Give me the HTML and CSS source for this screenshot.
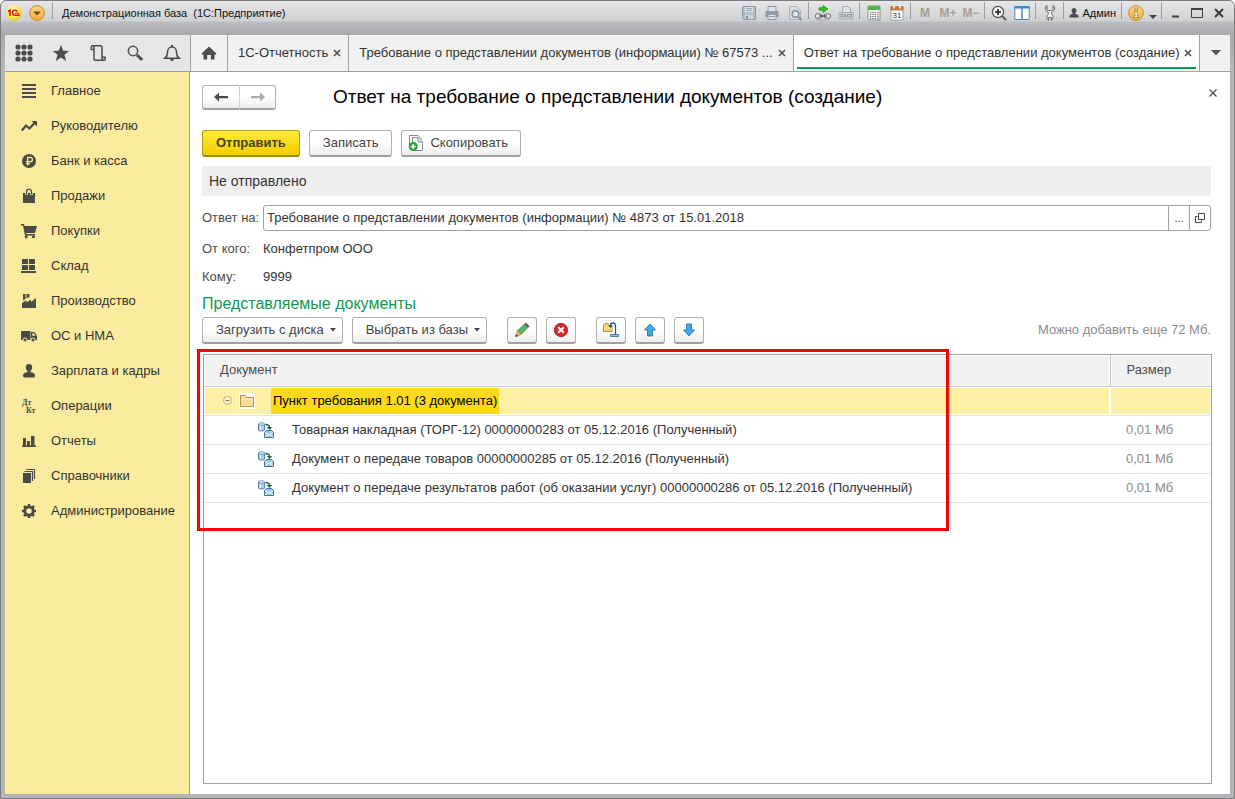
FILE: index.html
```html
<!DOCTYPE html>
<html lang="ru">
<head>
<meta charset="utf-8">
<title>Демонстрационная база (1С:Предприятие)</title>
<link rel="stylesheet" href="styles.css">
</head>
<body>
<div class="window">
  <header class="titlebar">
    <svg class="logo" viewBox="0 0 16 16" width="16" height="16" aria-hidden="true">
      <defs><radialGradient id="lg" cx=".4" cy=".3" r=".8"><stop offset="0" stop-color="#fffbc8"/><stop offset=".6" stop-color="#fde84a"/><stop offset="1" stop-color="#e9b81c"/></radialGradient>
      <linearGradient id="og" x2="0" y2="1"><stop offset="0" stop-color="#fcd489"/><stop offset="1" stop-color="#f7ae36"/></linearGradient></defs>
      <circle cx="8" cy="8" r="7.7" fill="url(#lg)"/>
      <path d="M2 6.500 4 5.200v5.600" fill="none" stroke="#e3190b" stroke-width="1.700"/>
      <path d="M11.300 6.600A2.500 2.500 0 1 0 9 10.200h5" fill="none" stroke="#e3190b" stroke-width="1.500"/>
      <path d="M9 8.200h4.500" fill="none" stroke="#e3190b" stroke-width="1"/>
    </svg>
    <button class="plain main-menu" aria-label="Главное меню"><svg viewBox="0 0 16 16" width="16" height="16"><circle cx="8" cy="8" r="7.400" fill="url(#og)" stroke="#c98a2c"/><path d="M4 6.500h8L8 10.500z" fill="#6b4a1c"/></svg></button>
    <span class="sep"></span>
    <span class="app-name">Демонстрационная база&nbsp; (1С:Предприятие)</span>
    <div class="system">
      <button class="plain cell" aria-label="Сохранить"><svg viewBox="0 0 16 16" width="16" height="16"><path d="M1.500 1.500h13v13h-12l-1-1z" fill="#b4bfca" stroke="#8b9aa9"/><path d="M4 2h8v5H4z" fill="#dde2e7"/><path d="M5 3.500h6M5 5.500h6" stroke="#9aa8b5"/><path d="M4 10h8v4H4z" fill="#cdd5dc"/><path d="M5 11h2v3H5z" fill="#8292a2"/></svg></button>
      <button class="plain cell" aria-label="Печать"><svg viewBox="0 0 16 16" width="16" height="16"><path d="M4 6V1.500h8V6" fill="#dfe2e6" stroke="#8f9ba8"/><path d="M1.500 6h13v6h-13z" fill="#8f9ba8"/><path d="M4 9.500h8v5H4z" fill="#dfe2e6" stroke="#8f9ba8"/><path d="M5 11.500h6" stroke="#8f9ba8"/></svg></button>
      <button class="plain cell" aria-label="Просмотр"><svg viewBox="0 0 16 16" width="16" height="16"><path d="M2.500 1.500h7l4 4v9h-11z" fill="#d6dbe0" stroke="#a7b1bb"/><circle cx="8.500" cy="9" r="3.300" fill="#dfe5ea" stroke="#8594a3" stroke-width="1.600"/><path d="m11 11.500 3.500 3.500" stroke="#8594a3" stroke-width="2"/></svg></button>
      <span class="sep"></span>
      <button class="plain cell" aria-label="Получить ссылку"><svg viewBox="0 0 16 16" width="16" height="16"><path d="M4 2.800h4V.5L13 4 8 7.500V5.200H4z" fill="#35c224" stroke="#168a12" stroke-width=".7"/><rect x=".6" y="9" width="6" height="4" rx="1" fill="#f3f3f3" stroke="#666"/><rect x="9.400" y="9" width="6" height="4" rx="1" fill="#f3f3f3" stroke="#666"/><path d="M4 11h8" stroke="#444" stroke-width="1.300"/><path d="M1 15h14" stroke="#aaa"/></svg></button>
      <button class="plain cell" aria-label="Перейти по ссылке"><svg viewBox="0 0 16 16" width="16" height="16"><path d="M4.500 7V1.500h5l3 2V7" fill="#dfe2e6" stroke="#a0a9b2"/><path d="M1 7.500h14v6.500H1z" fill="#d0d4d8" stroke="#a6aeb6"/><path d="M3 9.500h4v2.500H3zM9.500 9.500h4v2.500h-4zM6 11h4" fill="none" stroke="#8b949d"/></svg></button>
      <span class="sep"></span>
      <button class="plain cell" aria-label="Калькулятор"><svg viewBox="0 0 16 16" width="16" height="16"><path d="M2 1h12v14H2z" fill="#f3f5f3" stroke="#6a8c6a" stroke-width=".8"/><path d="M2 1h12v4H2z" fill="#4fb84b"/><path d="M4 7.500h6.500M4 9.500h6.500M4 11.500h6.500M4 13.500h6.500" stroke="#4a6a62" stroke-dasharray="1.300 1"/><path d="M12 7v4" stroke="#d33" stroke-dasharray="1.200 .8"/><path d="M12 11v3" stroke="#444" stroke-dasharray="1.200 .8"/></svg></button>
      <button class="plain cell" aria-label="Календарь"><svg viewBox="0 0 16 16" width="16" height="16"><path d="M2 1.500h12v13.500H2z" fill="#fbfcfd" stroke="#8994a0" stroke-width=".8"/><path d="M1.500 1.500h13V5.500h-13z" fill="#c0793f"/><path d="M5 .5v3M11 .5v3" stroke="#fff" stroke-width="1.500"/><text x="8" y="13" class="cal-num">31</text></svg></button>
      <span class="sep"></span>
      <button class="plain cell mem">M</button>
      <button class="plain cell mem">M+</button>
      <button class="plain cell mem">M−</button>
      <span class="sep"></span>
      <button class="plain cell" aria-label="Масштаб"><svg viewBox="0 0 16 16" width="16" height="16"><circle cx="7" cy="7" r="5.600" fill="#f4f4f4" stroke="#555" stroke-width="1.200"/><path d="M4 7h6M7 4v6" stroke="#222" stroke-width="1.600"/><path d="m11 11 4 4" stroke="#555" stroke-width="1.800"/></svg></button>
      <button class="plain cell" aria-label="Окна"><svg viewBox="0 0 16 16" width="16" height="16"><path d="M.8 1.500h14.400v13H.8z" fill="#fff" stroke="#4f87b8"/><path d="M.5 1h15v2.500H.5z" fill="#2f8fdd"/><path d="M8 3v11.500" stroke="#5e82a5" stroke-width="1.500"/></svg></button>
      <span class="sep"></span>
      <button class="plain cell" aria-label="Сервис"><svg viewBox="0 0 16 16" width="16" height="16"><path d="M5 .6C2.500 2 2.500 5.800 6.300 7.300v2.200c-2 1.500-1.800 4.500.2 5.900v-3h3v3c2-1.400 2.200-4.400.2-5.900V7.300C13.500 5.800 13.500 2 11 .6v3.900L9.500 5.500h-3L5 4.500z" fill="#f2f2f2" stroke="#666"/></svg></button>
      <span class="sep"></span>
      <button class="plain user"><svg viewBox="0 0 10 10" width="10" height="10"><path d="M5 0a2.400 2.500 0 0 1 1.500 4.500V6c2 .3 3 1 3 2.300V9.500H.5V8.300C.5 7 1.500 6.300 3.500 6V4.500A2.400 2.500 0 0 1 5 0z" fill="#4c4c4c"/></svg>Админ</button>
      <span class="sep"></span>
      <button class="plain cell" aria-label="Информация"><svg viewBox="0 0 16 16" width="16" height="16"><circle cx="8" cy="8" r="7.400" fill="url(#og)" stroke="#c5923c"/><path d="M7 3h2.500v2H7zM6 6.500h3.300V11h1.200v1.500h-5V11H7V8H6z" fill="#fffbe9" stroke="#8e6a30" stroke-width=".7"/></svg></button>
      <button class="plain caret-cell" aria-label="Ещё"><svg viewBox="0 0 8 6" width="8" height="6"><path d="M0 1h8L4 5z" fill="#444"/></svg></button>
      <span class="sep"></span>
      <button class="plain cell win" aria-label="Свернуть"><svg viewBox="0 0 12 12" width="12" height="12"><path d="M3 9.500h7" stroke="#3b3b3b" stroke-width="2"/></svg></button>
      <button class="plain cell win" aria-label="Развернуть"><svg viewBox="0 0 12 12" width="12" height="12"><path d="M.5 1.500h11v9H.5z" fill="none" stroke="#444"/><path d="M0 2h12" stroke="#444" stroke-width="2"/></svg></button>
      <button class="plain cell win" aria-label="Закрыть"><svg viewBox="0 0 12 12" width="12" height="12"><path d="m2 2 8 8M10 2 2 10" stroke="#3b3b3b" stroke-width="2"/></svg></button>
    </div>
  </header>

  <div class="client">
    <div class="topbar">
      <div class="tools">
        <button class="plain" aria-label="Меню функций"><svg viewBox="0 0 18 18" width="18" height="18" fill="#4d4d4d"><circle cx="3" cy="3" r="2.600"/><circle cx="9" cy="3" r="2.600"/><circle cx="15" cy="3" r="2.600"/><circle cx="3" cy="9" r="2.600"/><circle cx="9" cy="9" r="2.600"/><circle cx="15" cy="9" r="2.600"/><circle cx="3" cy="15" r="2.600"/><circle cx="9" cy="15" r="2.600"/><circle cx="15" cy="15" r="2.600"/></svg></button>
        <button class="plain" aria-label="Избранное"><svg viewBox="0 0 18 18" width="18" height="18"><path d="m9 1 2.200 5.800 6 .2-4.800 3.700L14.200 17 9 13.400 3.800 17l1.800-6.300L.8 7l6-.2z" fill="#4d4d4d"/></svg></button>
        <button class="plain" aria-label="История"><svg viewBox="0 0 18 18" width="18" height="18" fill="none" stroke="#4d4d4d" stroke-width="1.500"><path d="M5 5.500H2.200V3.500c0-1 .7-1.800 1.700-1.800h7.300c1 0 1.800.8 1.800 1.800v9.700h3.200v1.300c0 1-.7 1.800-1.700 1.800H6.800c-1 0-1.800-.8-1.800-1.800V3.500c0-1-.4-1.800-1.300-1.800M13 13.200v1.300c0 1 .5 1.800 1.500 1.800"/></svg></button>
        <button class="plain" aria-label="Поиск"><svg viewBox="0 0 18 18" width="18" height="18" fill="none" stroke="#4d4d4d"><circle cx="7" cy="7" r="4.700" stroke-width="1.500"/><path d="m11 11 5.200 5" stroke-width="3"/></svg></button>
        <button class="plain" aria-label="Уведомления"><svg viewBox="0 0 18 18" width="18" height="18"><path d="M2 14.200c2-1.500 2.500-3 2.500-6C4.500 5 6.500 3 9 3s4.500 2 4.500 5.200c0 3 .5 4.500 2.500 6z" fill="none" stroke="#4d4d4d" stroke-width="1.500"/><path d="M8 1h2v2H8zM6.500 15h5L9 17.500z" fill="#4d4d4d"/></svg></button>
      </div>
      <button class="plain home" aria-label="Начальная страница"><svg viewBox="0 0 16 14" width="16" height="14"><path d="m8 .5 7.500 7L14.300 9 13.500 8.200V13.500H9.800V9H6.200v4.500H2.500V8.200L1.700 9 .5 7.500z" fill="#4d4d4d"/></svg></button>
      <div class="tab">
        <button class="plain tab-name">1С-Отчетность</button>
        <button class="plain tab-x" aria-label="Закрыть"><svg viewBox="0 0 8 8" width="8" height="8"><path d="m1 1 6 6M7 1 1 7" stroke="#4d4d4d" stroke-width="1.600"/></svg></button>
      </div>
      <div class="tab">
        <button class="plain tab-name">Требование о представлении документов (информации) № 67573 ...</button>
        <button class="plain tab-x" aria-label="Закрыть"><svg viewBox="0 0 8 8" width="8" height="8"><path d="m1 1 6 6M7 1 1 7" stroke="#4d4d4d" stroke-width="1.600"/></svg></button>
      </div>
      <div class="tab active">
        <button class="plain tab-name">Ответ на требование о представлении документов (создание)</button>
        <button class="plain tab-x" aria-label="Закрыть"><svg viewBox="0 0 8 8" width="8" height="8"><path d="m1 1 6 6M7 1 1 7" stroke="#4d4d4d" stroke-width="1.600"/></svg></button>
      </div>
      <button class="plain more" aria-label="Список окон"><svg viewBox="0 0 10 6" width="10" height="6"><path d="M0 0h10L5 5.500z" fill="#555"/></svg></button>
    </div>

    <div class="body">
      <nav class="sidebar">
        <a href="#"><svg viewBox="0 0 16 16" width="16" height="16"><path d="M1 2h14M1 6h14M1 10h14M1 14h14" stroke="#4a4a46" stroke-width="2"/></svg>Главное</a>
        <a href="#"><svg viewBox="0 0 16 16" width="16" height="16"><path d="m.8 12.500 4.200-5 3.500 3 5-5.500" fill="none" stroke="#4a4a46" stroke-width="2.200"/><path d="M10.500 3H16v5.500z" fill="#4a4a46"/></svg>Руководителю</a>
        <a href="#"><svg viewBox="0 0 16 16" width="16" height="16"><circle cx="8" cy="8" r="7" fill="#4a4a46"/><path d="M6.700 12.500V4.300h2.500a2.200 2.200 0 0 1 0 4.400H5M5 10.600h4" fill="none" stroke="#fbeb9e" stroke-width="1.300"/></svg>Банк и касса</a>
        <a href="#"><svg viewBox="0 0 16 16" width="16" height="16"><path d="M2 5h12v10H2z" fill="#4a4a46"/><path d="M5.500 7V4a2.500 2.800 0 0 1 5 0v3" fill="none" stroke="#fbeb9e" stroke-width="2.600"/><path d="M5.500 6.500V4a2.500 2.800 0 0 1 5 0v2.500" fill="none" stroke="#4a4a46" stroke-width="1.200"/></svg>Продажи</a>
        <a href="#"><svg viewBox="0 0 16 16" width="16" height="16"><path d="M0 1h3l.6 2H16l-2 7H5l.3 1H14v1.500H4L2 2.500H0z" fill="#4a4a46"/><circle cx="5.200" cy="13.700" r="1.500" fill="#4a4a46"/><circle cx="12.500" cy="13.700" r="1.500" fill="#4a4a46"/></svg>Покупки</a>
        <a href="#"><svg viewBox="0 0 16 16" width="16" height="16"><path d="M1 1h6v5H1zM8 1h6v5H8zM1 7h6v5H1zM8 7h6v5H8zM0 13h15v2H0z" fill="#4a4a46"/></svg>Склад</a>
        <a href="#"><svg viewBox="0 0 16 16" width="16" height="16"><path d="M1 15V10l4.500-3v2.500L10 6.500V9l5-4v10zM2 1h2.500v5L2 7.500zM5.500 1H8.500v3L5.500 5.500z" fill="#4a4a46"/></svg>Производство</a>
        <a href="#"><svg viewBox="0 0 16 16" width="16" height="16"><path d="M0 3h9.500v9H0zM10 4h3.500L16 8v4h-6z" fill="#4a4a46"/><path d="M11.300 5.200H13l1.400 2.500h-3.100z" fill="#fbeb9e"/><circle cx="4" cy="12" r="2" fill="#4a4a46" stroke="#fbeb9e"/><circle cx="12" cy="12" r="2" fill="#4a4a46" stroke="#fbeb9e"/></svg>ОС и НМА</a>
        <a href="#"><svg viewBox="0 0 16 16" width="16" height="16"><path d="M8 1c2 0 3.200 1.200 3.200 3.200C11.200 6 10.500 7.200 9.500 8v1.300c3 .3 4.500 1.300 4.500 3.200 0 1.300-.5 2-1.500 2h-9c-1 0-1.500-.7-1.500-2 0-1.900 1.500-2.900 4.500-3.200V8c-1-.8-1.700-2-1.700-3.800C4.800 2.200 6 1 8 1z" fill="#4a4a46"/></svg>Зарплата и кадры</a>
        <a href="#"><svg viewBox="0 0 16 16" width="16" height="16"><text x="1" y="7" class="dtkt">Дт</text><text x="5" y="15" class="dtkt">Кт</text></svg>Операции</a>
        <a href="#"><svg viewBox="0 0 16 16" width="16" height="16"><path d="M1 12.500h14V14H1zM2 5h3v8H2zM6 8h3v5H6zM10 3h3.500v10H10z" fill="#4a4a46"/></svg>Отчеты</a>
        <a href="#"><svg viewBox="0 0 16 16" width="16" height="16"><path d="M2 5h8v10H2z" fill="#4a4a46"/><path d="M3.500 3.500h8V13M5.500 1.500h8V11" fill="none" stroke="#4a4a46" stroke-width="1.200"/></svg>Справочники</a>
        <a href="#"><svg viewBox="0 0 16 16" width="16" height="16"><circle cx="8" cy="8" r="4.200" fill="none" stroke="#4a4a46" stroke-width="2.800"/><path d="M8 1v2.500M8 12.500V15M1 8h2.500M12.500 8H15M3 3l1.800 1.800M11.200 11.200 13 13M13 3l-1.800 1.800M4.800 11.200 3 13" stroke="#4a4a46" stroke-width="2.600"/></svg>Администрирование</a>
      </nav>

      <main class="page">
        <div class="page-head">
          <div class="history">
            <button class="btn" aria-label="Назад"><svg viewBox="0 0 16 12" width="16" height="12"><path d="M1 6l5-4.500V5h9v2.200H6v3.300z" fill="#4a4a4a"/></svg></button>
            <button class="btn" aria-label="Вперед"><svg viewBox="0 0 16 12" width="16" height="12"><path d="m15 6-5-4.500V5H1v2.200h9v3.300z" fill="#ababab"/></svg></button>
          </div>
          <h1>Ответ на требование о представлении документов (создание)</h1>
          <button class="plain page-x" aria-label="Закрыть"><svg viewBox="0 0 8 8" width="8" height="8"><path d="m.5.5 7 7M7.500.5l-7 7" stroke="#444" stroke-width="1.100"/></svg></button>
        </div>

        <div class="commands">
          <button class="btn primary">Отправить</button>
          <button class="btn">Записать</button>
          <button class="btn copy"><svg viewBox="0 0 16 18" width="16" height="18"><path d="M1.500 14V1.500H8" fill="none" stroke="#7d8b97"/><path d="M4.500 3.500h5.500L14.500 8v8.500h-10z" fill="#fff" stroke="#7d8b97"/><path d="M7 1.500h3l4 4M10 3.500V8h4.500" fill="none" stroke="#7d8b97"/><circle cx="5.200" cy="12.500" r="4.500" fill="#2f9e3d"/><path d="M2.700 12.500h5M5.200 10v5" stroke="#fff" stroke-width="1.500"/></svg>Скопировать</button>
        </div>

        <div class="status">Не отправлено</div>

        <div class="row">
          <label for="reply">Ответ на:</label>
          <div class="field">
            <input id="reply" type="text" value="Требование о представлении документов (информации) № 4873 от 15.01.2018">
            <button class="plain dots" aria-label="Выбрать">...</button>
            <button class="plain" aria-label="Открыть"><svg viewBox="0 0 10 10" width="10" height="10" fill="none" stroke="#444"><path d="M3.500.5h6v6h-6zM2.500 3.500h-2v6h6v-2"/></svg></button>
          </div>
        </div>
        <div class="row text"><span class="label">От кого:</span><span>Конфетпром ООО</span></div>
        <div class="row text"><span class="label">Кому:</span><span>9999</span></div>

        <h2>Представляемые документы</h2>
        <div class="doc-tools">
          <button class="btn drop">Загрузить с диска<svg viewBox="0 0 6 4" width="6" height="4"><path d="M0 0h6L3 3.500z" fill="#444"/></svg></button>
          <button class="btn drop">Выбрать из базы<svg viewBox="0 0 6 4" width="6" height="4"><path d="M0 0h6L3 3.500z" fill="#444"/></svg></button>
          <div class="icon-group">
            <button class="btn icon" aria-label="Изменить"><svg viewBox="0 0 16 16" width="16" height="16"><path d="m3.500 8.500 7-6.500 3.500 3.500-7 7z" fill="#4fb860" stroke="#3c8a4a" stroke-width=".6"/><path d="m10.500 2 1.500-1.300 3.500 3.500-1.500 1.300z" fill="#3f5566"/><path d="M3.500 8.500 7 12.500l-3 1.700-2-2z" fill="#f0b555" stroke="#a67a35" stroke-width=".5"/><path d="m2 12 2.200 2.200L1 15z" fill="#444"/></svg></button>
            <button class="btn icon" aria-label="Удалить"><svg viewBox="0 0 16 16" width="16" height="16"><circle cx="8" cy="8" r="6.700" fill="#d9262b" stroke="#a91e22" stroke-width=".8"/><path d="m5.200 5.200 5.600 5.600M10.800 5.200l-5.600 5.600" stroke="#fff" stroke-width="2"/></svg></button>
          </div>
          <div class="icon-group">
            <button class="btn icon" aria-label="Перенести"><svg viewBox="0 0 16 16" width="16" height="16"><path d="M.5 9.500v-6L2 1.500h3l1 2h3v6z" fill="#fbd36d" stroke="#bf8a35"/><path d="M1 6h8" stroke="#fff0bd"/><path d="M12.500 12V4c0-2-1-3-2.700-3S7.500 2 7.500 3.500" fill="none" stroke="#225b80" stroke-width="1.300"/><path d="M5.200 3.500h4.600L7.500 6z" fill="#225b80"/><path d="M7.500 12.500h8v2h-8z" fill="#8db8e8" stroke="#4b7da8"/></svg></button>
            <button class="btn icon" aria-label="Вверх"><svg viewBox="0 0 16 16" width="16" height="16"><path d="M8 2 2.500 8H5.500v6h5V8h3z" fill="#42a8e8" stroke="#2b77aa" stroke-width=".9"/></svg></button>
            <button class="btn icon" aria-label="Вниз"><svg viewBox="0 0 16 16" width="16" height="16"><path d="M8 14 2.500 8H5.500V2h5v6h3z" fill="#42a8e8" stroke="#2b77aa" stroke-width=".9"/></svg></button>
          </div>
          <span class="hint">Можно добавить еще 72 Мб.</span>
        </div>

        <div class="grid">
          <table>
            <thead><tr><th>Документ</th><th class="size">Размер</th></tr></thead>
            <tbody>
              <tr class="group"><td><div class="line">
                <svg class="toggle" viewBox="0 0 9 9" width="9" height="9"><circle cx="4.500" cy="4.500" r="4" fill="#fff6c9" stroke="#a89d6e" stroke-width=".8"/><path d="M2.500 4.500h4" stroke="#7c734b"/></svg>
                <svg class="folder" viewBox="0 0 16 16" width="16" height="16"><path d="M0 0h16v16H0z" fill="#fff"/><path d="M1.500 13.500v-11h5l1 2h7v9z" fill="#f8dc94" stroke="#bd934a"/><path d="M2.500 6h11.500" stroke="#fff3cd"/></svg>
                <span class="selected">Пункт требования 1.01 (3 документа)</span></div></td><td class="size"></td></tr>
              <tr><td><div class="line doc"><svg viewBox="0 0 16 16" width="16" height="16"><use href="#docicon"/></svg>Товарная накладная (ТОРГ-12) 00000000283 от 05.12.2016 (Полученный)</div></td><td class="size">0,01 Мб</td></tr>
              <tr><td><div class="line doc"><svg viewBox="0 0 16 16" width="16" height="16"><use href="#docicon"/></svg>Документ о передаче товаров 00000000285 от 05.12.2016 (Полученный)</div></td><td class="size">0,01 Мб</td></tr>
              <tr><td><div class="line doc"><svg viewBox="0 0 16 16" width="16" height="16"><use href="#docicon"/></svg>Документ о передаче результатов работ (об оказании услуг) 00000000286 от 05.12.2016 (Полученный)</div></td><td class="size">0,01 Мб</td></tr>
            </tbody>
          </table>
          <div class="marker"></div>
        </div>
      </main>
    </div>
  </div>
</div>
<svg class="defs" width="0" height="0" aria-hidden="true"><defs>
  <g id="docicon"><path d="M.5 2v6c0 1.300 6 1.300 6 0V2" fill="#a9cdea" stroke="#5285ad"/><ellipse cx="3.500" cy="2" rx="3" ry="1.300" fill="#e4f2fc" stroke="#5285ad" stroke-width=".8"/><path d="M2.500 4v4" stroke="#eef7ff"/><path d="M7.500 2.500c3 0 4 1 4 3" fill="none" stroke="#24602b" stroke-width="1.300"/><path d="M8.800 5h5.400l-2.700 3z" fill="#24602b"/><path d="M6.500 15.500V10.500L8.500 8.500h5l2 2v5z" fill="#9ccae8" stroke="#3f7193"/><path d="m7 10.500 4 2.500 4-2.500M7 15l3-2.500M15 15l-3-2.500" fill="none" stroke="#f4fbff"/></g>
</defs></svg>
</body>
</html>
```
FILE: styles.css
```css
* { box-sizing: border-box; }
body {
  margin: 0;
  background: #fff;
  font: 13px/16px "Liberation Sans", Arial, sans-serif;
  color: #333;
}
button, input { font: inherit; color: inherit; }
svg { display: block; flex: none; }
.defs { position: absolute; }
.plain {
  display: flex;
  align-items: center;
  justify-content: center;
  padding: 0;
  border: 0;
  background: none;
  white-space: nowrap;
}

.window {
  display: flex;
  flex-direction: column;
  min-height: 100vh;
  padding: 0 4px 4px;
  border: 1px solid #7b7b7d;
  border-radius: 6px 6px 0 0;
  background: linear-gradient(#e6e6e7 0, #d0d1d3 20px, #bcbdbf 21px, #a9aaad 34px, #b3b5b8 60px, #b3b5b8 100%);
}
.titlebar {
  display: flex;
  align-items: flex-start;
  height: 34px;
  padding: 1px 0 0 1px;
  color: #111;
}
.titlebar .logo { margin-top: 3px; }
.main-menu { height: 22px; margin: 0 5px 0 7px; }
.sep { flex: none; width: 1px; height: 17px; margin: 0 2px; background: #9b9ea1; }
.app-name { padding-left: 7px; font-size: 11px; line-height: 22px; white-space: nowrap; }
.system { display: flex; margin-left: auto; }
.cell { width: 23px; height: 22px; }
.win { width: 22px; }
.caret-cell { width: 12px; height: 22px; padding-top: 8px; }
.mem { font-size: 12px; font-weight: bold; color: #a99d96; }
.user { gap: 3px; height: 22px; padding: 0 3px; font-size: 11px; }
.cal-num { font: 8px "Liberation Sans", Arial, sans-serif; fill: #333; text-anchor: middle; }

.client { display: flex; flex: 1; flex-direction: column; background: #fff; }
.topbar { display: flex; height: 37px; border-bottom: 1px solid #a0a0a0; background: #f1f1f1; }
.tools { display: flex; flex: none; width: 186px; border-right: 1px solid #a0a0a0; background: #e6e6e6; }
.tools button { flex: 1; }
.home { flex: none; width: 37px; border-right: 1px solid #a0a0a0; }
.tab {
  display: flex;
  flex: none;
  align-items: center;
  padding: 0 7px 0 10px;
  border-right: 1px solid #a0a0a0;
}
.tab-x { margin-left: auto; padding-left: 5px; }
.tab.active { position: relative; flex: 1 0 auto; background: #fff; }
.tab.active::after {
  position: absolute;
  right: 3px;
  bottom: 2px;
  left: 3px;
  height: 2px;
  background: #0f9950;
  content: "";
}
.more { flex: none; width: 31px; }

.body { display: flex; flex: 1; }
.sidebar { flex: none; width: 185px; padding-top: 1px; border-right: 1px solid #b5a420; background: #fbeb9e; }
.sidebar a {
  display: flex;
  gap: 14px;
  align-items: center;
  height: 35px;
  padding-left: 16px;
  color: #333;
  text-decoration: none;
  white-space: nowrap;
}
.dtkt { font: bold 8px "Liberation Serif", serif; fill: #4a4a46; }

.page { display: flex; flex: 1; flex-direction: column; min-width: 0; padding: 12px 19px 10px 12px; }
.page-head { display: flex; align-items: center; height: 26px; }
.history { display: flex; }
.btn {
  display: flex;
  align-items: center;
  justify-content: center;
  height: 27px;
  padding: 0 13px;
  border: 1px solid #b1b1b1;
  border-bottom: 2px solid #a0a0a0;
  border-radius: 3px;
  background: linear-gradient(#fff 50%, #ededed);
  color: #444;
  white-space: nowrap;
}
.history .btn { width: 37px; height: 25px; padding: 0; }
.history .btn:first-child { width: 38px; border-right-color: #d0d0d0; border-radius: 3px 0 0 3px; }
.history .btn:last-child { width: 36px; border-left: 0; border-radius: 0 3px 3px 0; }
h1 { flex: 1; margin: 0 0 0 57px; font-size: 19px; font-weight: normal; line-height: 24px; color: #000; }
.page-x { align-self: flex-start; width: 8px; margin: 5px -6px 0 0; }
.commands { display: flex; gap: 9px; margin-top: 20px; }
.primary {
  border-color: #b89f00;
  border-bottom-color: #9e8a00;
  background: linear-gradient(#ffe93c, #f2cf00);
  font-weight: bold;
  color: #4a4224;
}
.copy { gap: 6px; padding: 0 12px 0 6px; }
.status { margin-top: 9px; padding: 0 7px; background: #efefef; font-size: 14px; line-height: 30px; }
.row { display: flex; align-items: center; }
.row label, .row .label { flex: none; width: 61px; color: #4d4d4d; }
.row .field {
  display: flex;
  flex: 1;
  height: 26px;
  border: 1px solid #a0a0a0;
  border-radius: 3px;
}
.status + .row { margin-top: 9px; }
.field input { flex: 1; min-width: 0; padding: 0 3px; border: 0; outline: 0; background: none; }
.field button { width: 21px; border-left: 1px solid #a0a0a0; }
.field .dots { font-size: 11px; }
.row.text { margin-top: 9px; line-height: 18px; }
.row.text + .row.text { margin-top: 10px; }
h2 { margin: 8px 0 2px; font-size: 16px; font-weight: normal; line-height: 20px; color: #0f9950; }
.doc-tools { display: flex; align-items: center; gap: 9px; height: 28px; }
.drop { gap: 6px; padding-right: 6px; }
.icon { width: 30px; padding: 0; }
.icon-group { display: flex; gap: 9px; margin-left: 11px; }
.hint { margin-left: auto; color: #8c8c8c; }

.grid { position: relative; flex: 1; margin: 10px -1px 0 1px; border: 1px solid #a0a0a0; }
table { width: 100%; border-collapse: collapse; }
th { height: 31px; padding: 0 16px; border-bottom: 1px solid #c4c4c4; background: #f1f1f1; box-shadow: inset 0 0 0 1px #fff; font-weight: normal; text-align: left; color: #4d4d4d; }
th.size { border-left: 1px solid #c4c4c4; }
td { height: 29px; padding: 0; border-bottom: 1px solid #e3e3e3; }
.size { width: 101px; padding: 0 16px; }
td.size { color: #8c8c8c; }
.group td { background: #fcf0a4; box-shadow: inset 0 0 0 1px #fff; }
.line { display: flex; align-items: center; color: #333; white-space: nowrap; }
.doc { gap: 18px; padding-left: 54px; }
.toggle { margin-left: 19px; }
.folder { margin-left: 7px; }
.selected { margin-left: 16px; padding: 0 2px; background: #fbd91e; line-height: 26px; color: #000; }
.marker { position: absolute; top: -6px; left: -7px; width: 752px; height: 182px; border: 3px solid #f00; pointer-events: none; }
```
